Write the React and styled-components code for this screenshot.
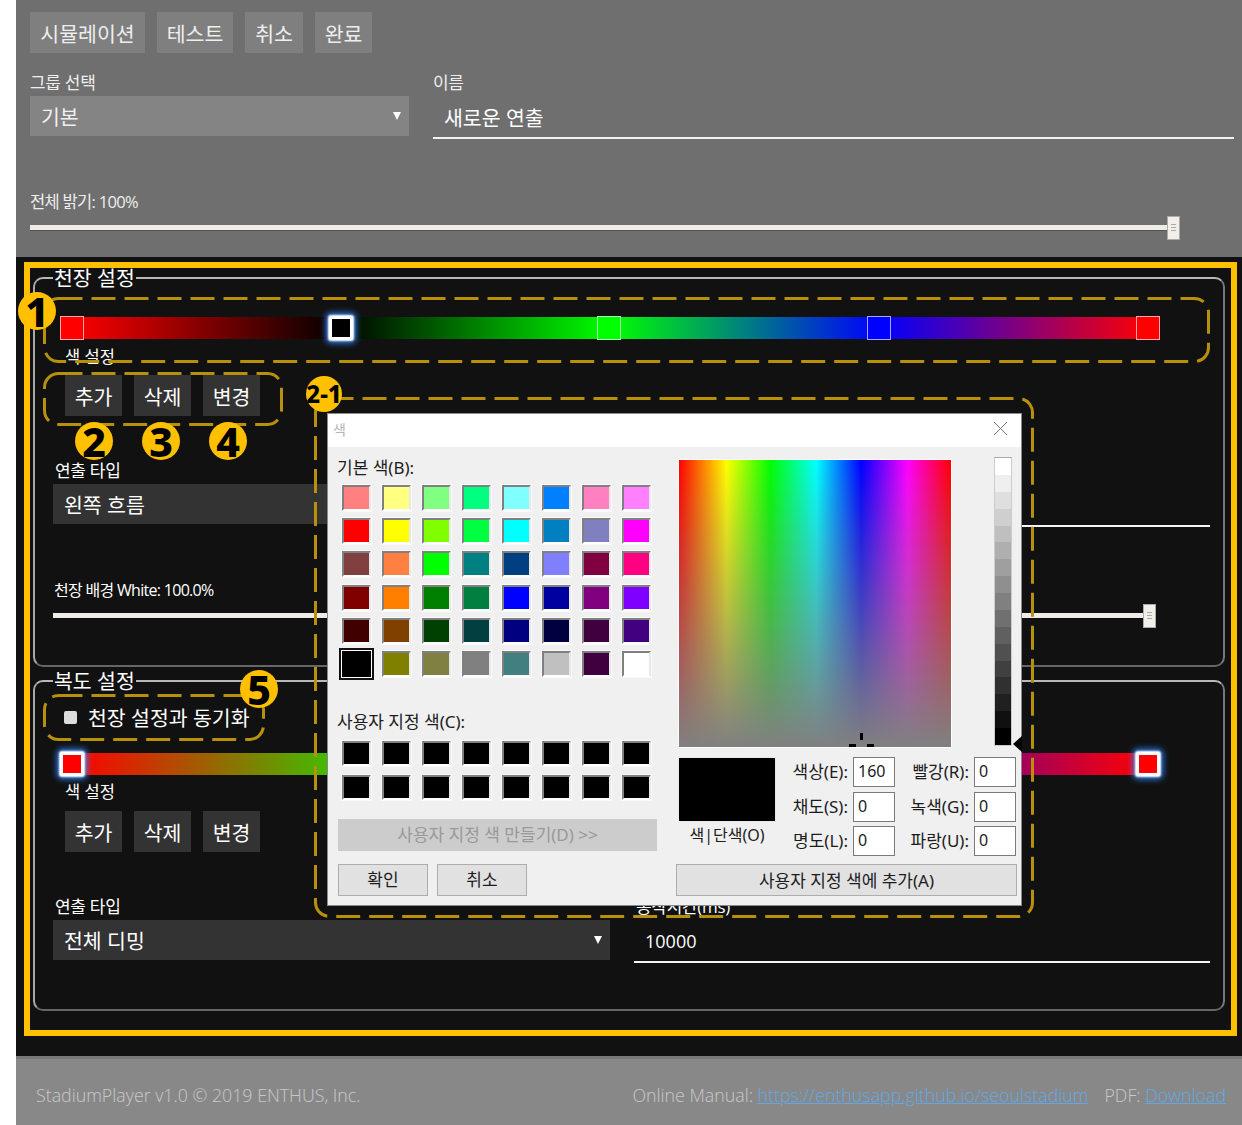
import React from 'react';
import styled, { createGlobalStyle } from 'styled-components';

const GlobalStyle = createGlobalStyle`
  * {
    box-sizing: border-box;
  }
  html, body {
    margin: 0;
    background: #fff;
  }
  body {
    font-family: 'Open Sans', 'Noto Sans CJK KR', sans-serif;
  }
`;

const Page = styled.div`
  position: relative;
  width: 1242px;
  height: 1125px;
  padding-left: 16px;
  overflow: hidden;
  background: #fff;
  color: #fff;
`;

const TopSection = styled.section`
  height: 245px;
  box-sizing: content-box;
  padding: 12px 8px 0 14px;
  background: #6f6f6f;
`;

const ButtonRow = styled.div`
  display: flex;
  gap: ${props => props.$gap || 12}px;
`;

const Button = styled.div`
  height: 41px;
  display: flex;
  align-items: center;
  justify-content: center;
  width: ${props => props.$width}px;
  background: ${props => (props.$dark ? '#333' : '#7f7f7f')};
  color: ${props => (props.$dark ? '#fff' : '#eee')};
  font-size: 20.5px;
  white-space: nowrap;
`;

const FieldRow = styled.div`
  display: grid;
  grid-template-columns: ${props => props.$left}px 1fr;
  column-gap: 24px;
  margin-top: ${props => props.$top}px;
`;

const FieldLabel = styled.div`
  height: 22px;
  line-height: 25px;
  font-size: 17px;
  letter-spacing: -0.3px;
  margin-bottom: 4px;
  padding-left: ${props => (props.$dark ? 2 : 0)}px;
  color: ${props => (props.$dark ? '#fff' : '#eee')};
`;

const Select = styled.div`
  height: 40px;
  margin-top: ${props => (props.$light ? 1 : 0)}px;
  padding: 0 8px 0 11px;
  display: flex;
  align-items: center;
  justify-content: space-between;
  font-size: 20.5px;
  background: ${props => (props.$light ? '#848484' : '#333')};
  color: ${props => (props.$light ? '#f0f0f0' : '#fff')};
`;

const Arrow = styled.span`
  width: 0;
  height: 0;
  border-left: 4px solid transparent;
  border-right: 4px solid transparent;
  border-top: 8px solid #fff;
`;

const TextInput = styled.div`
  height: 43px;
  padding-left: 11px;
  display: flex;
  align-items: center;
  font-size: ${props => (props.$light ? 20.5 : 18)}px;
  border-bottom: 2px solid #f4f4f4;
  margin-top: ${props => (props.$light ? 1 : 0)}px;
`;

const SliderLabel = styled.div`
  height: 22px;
  line-height: 22px;
  font-size: ${props => (props.$dark ? 16 : 16.5)}px;
  letter-spacing: -0.7px;
  padding-left: ${props => (props.$dark ? 1 : 0)}px;
  margin-top: ${props => props.$top}px;
  color: ${props => (props.$dark ? '#fff' : '#eee')};
`;

const SliderTrack = styled.div`
  position: relative;
  width: ${props => props.$width}px;
  height: 24px;
  margin-top: ${props => props.$top}px;

  &::before {
    content: '';
    position: absolute;
    left: 0;
    right: 12px;
    top: 9px;
    height: 5px;
    background: #efebe6;
    box-shadow: 0 1px 0 rgba(0, 0, 0, 0.25);
  }
`;

const SliderThumb = styled.div`
  position: absolute;
  right: 0;
  top: 0;
  width: 13px;
  height: 24px;
  padding-top: 7px;
  background: #f2efea;
  border: 1px solid #aaa;
  display: flex;
  flex-direction: column;
  align-items: center;
  gap: 2px;

  & > i {
    width: 5px;
    height: 1px;
    background: #aaa;
  }
`;

const DarkSection = styled.section`
  height: 799px;
  padding: 7px 17px 0;
  background: #111;
`;

const Panel = styled.fieldset`
  margin: 0;
  height: ${props => props.$height}px;
  min-width: 0;
  padding: 0 13px 0 18px;
  border-width: 2px;
  border-style: solid;
  border-color: #b8b8b8 #777 #666 #a8a8a8;
  border-radius: 10px;
`;

const PanelTitle = styled.legend`
  padding: 0 1px;
  margin-left: 0;
  height: 28px;
  line-height: 28px;
  font-size: 20.5px;
  color: #fff;
`;

const ColorBar = styled.div`
  position: relative;
  width: 1100px;
  height: 22px;
  margin: ${props => props.$top}px 0 0 7px;
  background: linear-gradient(to right, ${props => props.$stops});
`;

const Handle = styled.div`
  position: absolute;
  top: -1px;
  width: 24px;
  height: 24px;
  margin-left: -12px;
  background: ${props => props.$color};
  border: ${props => (props.$active ? '3px solid #fff' : '1px solid rgba(255, 255, 255, 0.65)')};
  border-radius: ${props => (props.$active ? 2 : 0)}px;
  box-shadow: ${props => (props.$active ? '0 0 2px 1px #fff, 0 0 6px 3px #2f80f0' : 'none')};
`;

const SmallLabel = styled.div`
  height: 20px;
  line-height: 23px;
  margin: ${props => props.$top}px 0 0 12px;
  font-size: 16.5px;
  color: #fff;
`;

const PanelButtons = styled(ButtonRow)`
  margin: ${props => props.$top}px 0 0 12px;
`;

const SyncRow = styled.div`
  height: 44px;
  padding-left: 11px;
  display: flex;
  align-items: center;
  gap: 11px;
  font-size: 20.5px;
`;

const CheckBox = styled.span`
  width: 13px;
  height: 13px;
  border-radius: 2px;
  background: #ddd;
`;

const Footer = styled.footer`
  height: 69px;
  padding: 6px 16px 0 20px;
  display: flex;
  align-items: center;
  justify-content: space-between;
  background: #888;
  border-top: 3px solid #777;
  color: #c8c8c8;
  font-size: 17.8px;
  font-weight: 300;
  white-space: nowrap;
`;

const FooterLink = styled.a`
  color: #62a8e6;
  text-decoration: underline;
`;

const PdfGap = styled.span`
  margin-left: 16px;
`;

/* annotation layer on top of the app */
const HighlightFrame = styled.div`
  position: absolute;
  left: 24px;
  top: 262px;
  width: 1213px;
  height: 774px;
  border: 6px solid #ffc000;
  pointer-events: none;
`;

const DashLayer = styled.svg`
  position: absolute;
  left: 0;
  top: 0;
  z-index: 1;
`;

const Marker = styled.div`
  position: absolute;
  z-index: 3;
  left: ${props => props.$x - props.$r}px;
  top: ${props => props.$y - props.$r}px;
  width: ${props => props.$r * 2}px;
  height: ${props => props.$r * 2}px;
  border-radius: 50%;
  background: #ffc000;
  color: #000;
  display: flex;
  align-items: center;
  justify-content: center;
  font-family: 'Noto Sans', sans-serif;
  font-weight: 800;
  font-size: ${props => props.$size || 41}px;
  line-height: 1;
  white-space: nowrap;
`;

/* windows color picker */
const Dialog = styled.div`
  position: absolute;
  z-index: 2;
  left: 327px;
  top: 413px;
  width: 695px;
  height: 493px;
  background: #f0f0f0;
  border: 1px solid #8a8a8a;
  color: #1c1c1c;
  font-family: 'Noto Sans', 'Noto Sans CJK KR', sans-serif;
  font-size: 17px;
`;

const DialogTitle = styled.div`
  height: 33px;
  padding: 0 13px 4px 5px;
  display: flex;
  align-items: center;
  justify-content: space-between;
  background: #fff;
  color: #b5b5b5;
  font-size: 14px;
`;

const DialogBody = styled.div`
  display: flex;
  padding-left: 10px;
`;

const LeftCol = styled.div`
  width: 319px;
`;

const RightCol = styled.div`
  position: relative;
  width: 341px;
  margin-left: 19px;
`;

const PickerLabel = styled.div`
  height: 22px;
  line-height: 23px;
  margin-top: ${props => props.$top}px;
  margin-left: -1px;
  font-size: 17px;
`;

const SwatchGrid = styled.div`
  display: grid;
  grid-template-columns: repeat(8, 29px);
  grid-auto-rows: ${props => props.$row}px;
  column-gap: 11px;
  row-gap: ${props => props.$gap}px;
  margin: ${props => props.$top}px 0 0 4px;
`;

const Swatch = styled.div`
  background: ${props => props.$color};
  border: 2px solid;
  border-color: ${props => (props.$selected ? '#000' : '#808080 #e8e8e8 #fff #808080')};
  box-shadow: ${props => (props.$selected ? '0 0 0 1px #fff, 0 0 0 3px #111' : '0 0 0 1px #fafafa')};
`;

const WinButton = styled.div`
  height: 32px;
  width: ${props => (props.$width ? `${props.$width}px` : 'auto')};
  margin-top: ${props => props.$top || 0}px;
  padding-bottom: 2px;
  display: flex;
  align-items: center;
  justify-content: center;
  background: ${props => (props.$disabled ? '#ccc' : '#e1e1e1')};
  border: 1px solid ${props => (props.$disabled ? '#ccc' : '#adadad')};
  color: ${props => (props.$disabled ? '#999' : '#1c1c1c')};
  font-size: 17px;
`;

const WinButtons = styled.div`
  display: flex;
  gap: 9px;
  margin-top: 13px;
`;

const PickerTop = styled.div`
  display: flex;
  height: 299px;
  padding: 12px 0 0 2px;
`;

const Spectrum = styled.div`
  position: relative;
  width: 274px;
  height: 289px;
  border: 1px solid #fff;
  background:
    linear-gradient(to bottom, rgba(128, 128, 128, 0), #808080),
    linear-gradient(to right, #f00, #ff0 17.5%, #0f0 33.5%, #0ff 50.5%, #00f 67%, #f0f 84%, #f00);
`;

const CrossHair = styled.svg`
  position: absolute;
  left: 170px;
  bottom: 0;
`;

const LumBar = styled.div`
  width: 18px;
  height: 289px;
  margin: -2px 0 0 42px;
  border: 1px solid #ccc;
  border-top-color: #aaa;
  background: linear-gradient(to bottom, ${props => props.$stops});
`;

const LumArrow = styled.div`
  position: absolute;
  right: -5px;
  top: 289px;
  width: 0;
  height: 0;
  border-top: 8px solid transparent;
  border-bottom: 8px solid transparent;
  border-right: 9px solid #000;
`;

const PickerBottom = styled.div`
  display: flex;
  margin-top: 11px;
  padding-left: 2px;
`;

const PreviewBox = styled.div`
  width: 98px;
  text-align: center;
  font-size: 16px;
  line-height: 22px;

  & > div {
    height: 65px;
    background: #000;
    margin-bottom: 2px;
    border: 1px solid #e8e8e8;
  }
`;

const ValueGrid = styled.div`
  display: grid;
  grid-template-columns: 70px 42px 79px 42px;
  grid-auto-rows: 30px;
  row-gap: 4.5px;
  margin-left: 7px;
  align-items: center;
`;

const ValueLabel = styled.span`
  text-align: right;
  padding: 0 5px 3px 0;
  white-space: nowrap;
  font-size: 17px;
`;

const ValueBox = styled.div`
  height: 30px;
  padding-left: 4px;
  line-height: 26px;
  background: #fff;
  border: 1px solid #7a7a7a;
  font-size: 16px;
`;

const SWATCHES = [
  '#ff8080', '#ffff80', '#80ff80', '#00ff80', '#80ffff', '#0080ff', '#ff80c0', '#ff80ff',
  '#ff0000', '#ffff00', '#80ff00', '#00ff40', '#00ffff', '#0080c0', '#8080c0', '#ff00ff',
  '#804040', '#ff8040', '#00ff00', '#008080', '#004080', '#8080ff', '#800040', '#ff0080',
  '#800000', '#ff8000', '#008000', '#008040', '#0000ff', '#0000a0', '#800080', '#8000ff',
  '#400000', '#804000', '#004000', '#004040', '#000080', '#000040', '#400040', '#400080',
  '#000000', '#808000', '#808040', '#808080', '#408080', '#c0c0c0', '#400040', '#ffffff'
];

const CEILING_STOPS = '#f00 1.1%, #000 25.5%, #0f0 50%, #00f 74.5%, #f00 99%';
const AISLE_STOPS = '#f00 1.1%, #0f0 33%, #00f 66.5%, #f00 99%';

// the luminance bar is drawn in hard steps like the win32 one
const lumStops = () => {
  const steps = 17;
  const out = [];
  for (let i = 0; i < steps; i++) {
    const v = Math.round(255 * (1 - i / (steps - 1)));
    const c = `rgb(${v},${v},${v})`;
    out.push(`${c} ${(i / steps) * 100}%`, `${c} ${((i + 1) / steps) * 100}%`);
  }
  return out.join(', ');
};

const Slider = ({ width, top }) => (
  <SliderTrack $width={width} $top={top}>
    <SliderThumb>
      <i />
      <i />
      <i />
    </SliderThumb>
  </SliderTrack>
);

const EditButtons = ({ top }) => (
  <PanelButtons $top={top}>
    <Button $dark $width={57}>추가</Button>
    <Button $dark $width={57}>삭제</Button>
    <Button $dark $width={57}>변경</Button>
  </PanelButtons>
);

const TypeFields = ({ top, type }) => (
  <FieldRow $left={557} $top={top}>
    <div>
      <FieldLabel $dark>연출 타입</FieldLabel>
      <Select>
        {type}
        <Arrow />
      </Select>
    </div>
    <div>
      <FieldLabel $dark>동작시간(ms)</FieldLabel>
      <TextInput>10000</TextInput>
    </div>
  </FieldRow>
);

const ColorDialog = () => (
  <Dialog>
    <DialogTitle>
      색
      <svg width="15" height="15" viewBox="0 0 15 15">
        <path d="M1 1 L14 14 M14 1 L1 14" stroke="#777" strokeWidth="1" fill="none" />
      </svg>
    </DialogTitle>
    <DialogBody>
      <LeftCol>
        <PickerLabel $top={9}>기본 색(B):</PickerLabel>
        <SwatchGrid $row={26} $gap={7.2} $top={7}>
          {SWATCHES.map((color, i) => (
            <Swatch key={i} $color={color} $selected={i === 40} />
          ))}
        </SwatchGrid>
        <PickerLabel $top={33}>사용자 지정 색(C):</PickerLabel>
        <SwatchGrid $row={25} $gap={9} $top={9}>
          {Array.from({ length: 16 }).map((_, i) => (
            <Swatch key={i} $color="#000" />
          ))}
        </SwatchGrid>
        <WinButton $disabled $top={19}>사용자 지정 색 만들기(D) &gt;&gt;</WinButton>
        <WinButtons>
          <WinButton $width={90}>확인</WinButton>
          <WinButton $width={90}>취소</WinButton>
        </WinButtons>
      </LeftCol>
      <RightCol>
        <PickerTop>
          <Spectrum>
            <CrossHair width="26" height="14" viewBox="0 0 26 14">
              <path d="M11 0h3v7h-3z M0 11h7v3H0z M18 11h7v3h-7z" fill="#000" />
            </CrossHair>
          </Spectrum>
          <LumBar $stops={lumStops()} />
        </PickerTop>
        <LumArrow />
        <PickerBottom>
          <PreviewBox>
            <div />
            색|단색(O)
          </PreviewBox>
          <ValueGrid>
            <ValueLabel>색상(E):</ValueLabel>
            <ValueBox>160</ValueBox>
            <ValueLabel>빨강(R):</ValueLabel>
            <ValueBox>0</ValueBox>
            <ValueLabel>채도(S):</ValueLabel>
            <ValueBox>0</ValueBox>
            <ValueLabel>녹색(G):</ValueLabel>
            <ValueBox>0</ValueBox>
            <ValueLabel>명도(L):</ValueLabel>
            <ValueBox>0</ValueBox>
            <ValueLabel>파랑(U):</ValueLabel>
            <ValueBox>0</ValueBox>
          </ValueGrid>
        </PickerBottom>
        <WinButton $top={8}>사용자 지정 색에 추가(A)</WinButton>
      </RightCol>
    </DialogBody>
  </Dialog>
);

const dashRects = [
  { x: 44.5, y: 298.5, w: 1164, h: 63, r: 14 },
  { x: 44.5, y: 373.5, w: 237, h: 51, r: 14 },
  { x: 315.5, y: 398.5, w: 717, h: 518, r: 14 },
  { x: 44.5, y: 695.5, w: 219, h: 44, r: 14 }
];

const App = () => (
  <Page>
    <GlobalStyle />
    <TopSection>
      <ButtonRow>
        <Button $width={115}>시뮬레이션</Button>
        <Button $width={76}>테스트</Button>
        <Button $width={58}>취소</Button>
        <Button $width={57}>완료</Button>
      </ButtonRow>
      <FieldRow $left={379} $top={17}>
        <div>
          <FieldLabel>그룹 선택</FieldLabel>
          <Select $light>
            기본
            <Arrow />
          </Select>
        </div>
        <div>
          <FieldLabel>이름</FieldLabel>
          <TextInput $light>새로운 연출</TextInput>
        </div>
      </FieldRow>
      <SliderLabel $top={52}>전체 밝기: 100%</SliderLabel>
      <Slider width={1150} top={3} />
    </TopSection>

    <DarkSection>
      <Panel $height={403}>
        <PanelTitle>천장 설정</PanelTitle>
        <ColorBar $top={25} $stops={CEILING_STOPS}>
          <Handle style={{ left: '1.1%' }} $color="#f00" />
          <Handle style={{ left: '25.55%' }} $color="#000" $active />
          <Handle style={{ left: '49.9%' }} $color="#0f0" />
          <Handle style={{ left: '74.45%' }} $color="#00f" />
          <Handle style={{ left: '98.9%' }} $color="#f00" />
        </ColorBar>
        <SmallLabel $top={6}>색 설정</SmallLabel>
        <EditButtons top={10} />
        <TypeFields top={42} type="왼쪽 흐름" />
        <SliderLabel $top={52} $dark>천장 배경 White: 100.0%</SliderLabel>
        <Slider width={1103} top={3} />
      </Panel>

      <Panel $height={344}>
        <PanelTitle>복도 설정</PanelTitle>
        <SyncRow>
          <CheckBox />
          천장 설정과 동기화
        </SyncRow>
        <ColorBar $top={14} $stops={AISLE_STOPS}>
          <Handle style={{ left: '1.1%' }} $color="#f00" $active />
          <Handle style={{ left: '98.9%' }} $color="#f00" $active />
        </ColorBar>
        <SmallLabel $top={5}>색 설정</SmallLabel>
        <EditButtons top={11} />
        <TypeFields top={42} type="전체 디밍" />
      </Panel>
    </DarkSection>

    <Footer>
      <span>StadiumPlayer v1.0 © 2019 ENTHUS, Inc.</span>
      <span>
        Online Manual: <FooterLink>https://enthusapp.github.io/seoulstadium</FooterLink>
        <PdfGap>PDF: </PdfGap>
        <FooterLink>Download</FooterLink>
      </span>
    </Footer>

    <HighlightFrame />
    <DashLayer width="1242" height="1125" viewBox="0 0 1242 1125">
      {dashRects.map((d, i) => (
        <rect
          key={i}
          x={d.x}
          y={d.y}
          width={d.w}
          height={d.h}
          rx={d.r}
          fill="none"
          stroke="#b8900c"
          strokeWidth="3"
          strokeDasharray="24 9"
        />
      ))}
    </DashLayer>
    <ColorDialog />
    <Marker $x={37} $y={311} $r={19}>1</Marker>
    <Marker $x={94} $y={441} $r={19}>2</Marker>
    <Marker $x={161} $y={441} $r={19}>3</Marker>
    <Marker $x={228} $y={441} $r={19}>4</Marker>
    <Marker $x={259} $y={689} $r={19}>5</Marker>
    <Marker $x={324} $y={394} $r={18} $size={24}>2-1</Marker>
  </Page>
);

export default App;
